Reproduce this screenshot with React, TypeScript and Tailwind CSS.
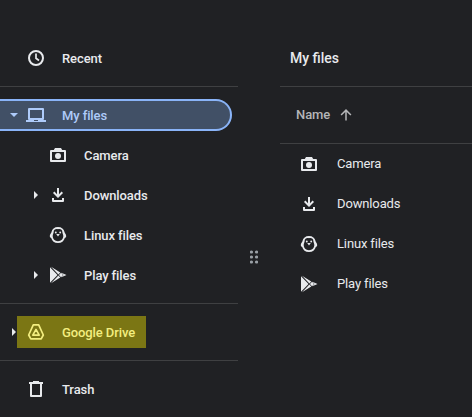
import type { ReactNode } from "react";

type IconName = "clock" | "laptop" | "camera" | "download" | "linux" | "play" | "drive" | "trash";

const shapes: Record<IconName, ReactNode> = {
  clock: (
    <g fill="none" stroke="currentColor" strokeWidth="2">
      <circle cx="10" cy="10" r="7" />
      <path d="M10 5.500v4.800l3 2.200" strokeWidth="1.700" />
    </g>
  ),
  laptop: (
    <path fillRule="evenodd" d="M3 3h14a1 1 0 0 1 1 1v10a1 1 0 0 1-1 1h3v2H0v-2h3a1 1 0 0 1-1-1V4a1 1 0 0 1 1-1zm1 2v8h12V5zM8 15v1h4v-1z" />
  ),
  camera: (
    <>
      <path fillRule="evenodd" d="M7 3h6l1.200 2H17a1 1 0 0 1 1 1v10a1 1 0 0 1-1 1H3a1 1 0 0 1-1-1V6a1 1 0 0 1 1-1h2.800zM4 7v8h12V7z" />
      <circle cx="10" cy="11" r="3" />
    </>
  ),
  download: (
    <path d="M9 3h2v6.200l2.600-2.600L15 8l-5 5-5-5 1.400-1.400L9 9.200zM4 13h2v2h8v-2h2v3a1 1 0 0 1-1 1H5a1 1 0 0 1-1-1z" />
  ),
  linux: (
    <>
      <path fillRule="evenodd" d="M10 2c3.600 0 6 2 6.500 5 .2 1.200 1.700 2.400 1.700 4 0 1-.6 1.700-1.400 2C15.900 16 13.700 18 10 18s-5.900-2-6.800-5c-.8-.3-1.400-1-1.400-2 0-1.600 1.500-2.800 1.700-4C4 4 6.400 2 10 2zm0 2.200C8 3.400 5.600 4.500 5.600 7.200c0 1.200-.9 2-.9 3.800 0 3 2.100 5.200 5.300 5.200s5.300-2.200 5.300-5.200c0-1.800-.9-2.600-.9-3.800 0-2.700-2.400-3.800-4.400-3z" />
      <circle cx="7.800" cy="7.500" r=".95" />
      <circle cx="12.200" cy="7.500" r=".95" />
      <path d="M8.200 9h3.600L10 11.500z" />
    </>
  ),
  play: (
    <path d="M2 2.200v15.600L9.500 10zM3 1.700l7.400 7.700 1.900-1.900zM3 18.300l9.300-5.800-1.900-1.900zM13 7.800 10.900 10l2.100 2.200L15 10zM13.300 7.700l5.200 2.300-5.200 2.300 2.200-2.300z" />
  ),
  drive: (
    <g fill="none" stroke="currentColor" strokeLinejoin="round" strokeWidth="1.700">
      <path d="M7.300 2.900h5.400L17.300 13 15.200 16.800H4.800L2.700 13z" />
      <path d="M10 7.400 13.200 13.100H6.800z" />
    </g>
  ),
  trash: (
    <path fillRule="evenodd" d="M7 2h6v1h4v2h-1v12a1 1 0 0 1-1 1H5a1 1 0 0 1-1-1V5H3V3h4zM6 5v11h8V5z" />
  ),
};

function Icon({ name }: { name: IconName }) {
  return (
    <svg className="size-5 shrink-0" viewBox="0 0 20 20" fill="currentColor">
      {shapes[name]}
    </svg>
  );
}

function RightCaret() {
  return (
    <svg className="h-2 w-1 shrink-0" viewBox="0 0 4 8" fill="currentColor">
      <path d="M0 0l4 4-4 4z" />
    </svg>
  );
}

function NavLabel({ children }: { children: string }) {
  return <span className="ml-4 pt-0.5 tracking-[-0.1px]">{children}</span>;
}

function Child({ name, label, expandable }: { name: IconName; label: string; expandable?: boolean }) {
  return (
    <div className="flex h-8 items-center pl-[34px]">
      <span className="flex w-3.5">{expandable && <RightCaret />}</span>
      <Icon name={name} />
      <NavLabel>{label}</NavLabel>
    </div>
  );
}

function FileRow({ name, label }: { name: IconName; label: string }) {
  return (
    <div className="flex h-10 items-center pl-[19px]">
      <Icon name={name} />
      <span className="ml-[18px] tracking-[-0.14px]">{label}</span>
    </div>
  );
}

const Divider = () => <div className="h-px bg-[#3f4042]" />;

export default function App() {
  return (
    <div className="flex h-[417px] w-[472px] overflow-hidden bg-[#202124] font-['Roboto',sans-serif] text-[13px] leading-5 text-[#e8eaed]">
      <nav className="flex w-[238px] shrink-0 flex-col gap-3 pt-[42px] font-medium">
        <div className="flex h-8 items-center pl-[26px]">
          <Icon name="clock" />
          <NavLabel>Recent</NavLabel>
        </div>
        <Divider />
        <div className="flex flex-col gap-2">
          <div className="flex h-8 w-[232px] items-center rounded-r-full border-y-2 border-r-2 border-[#8ab4f8] bg-[#415066] pl-2.5 text-[#aecbfa]">
            <svg className="mr-2 h-1 w-2" viewBox="0 0 8 4" fill="currentColor">
              <path d="M0 0h8L4 4z" />
            </svg>
            <Icon name="laptop" />
            <NavLabel>My files</NavLabel>
          </div>
          <Child name="camera" label="Camera" />
          <Child name="download" label="Downloads" expandable />
          <Child name="linux" label="Linux files" />
          <Child name="play" label="Play files" expandable />
        </div>
        <Divider />
        <div className="flex h-8 items-center pl-3">
          <span className="flex w-[5px]">
            <RightCaret />
          </span>
          <div className="flex h-8 w-[129px] items-center bg-[#7b7614] pl-[9px] text-[#f3ee80]">
            <Icon name="drive" />
            <NavLabel>Google Drive</NavLabel>
          </div>
        </div>
        <Divider />
        <div className="flex h-8 items-center pl-[26px]">
          <Icon name="trash" />
          <NavLabel>Trash</NavLabel>
        </div>
      </nav>
      <div className="flex w-[42px] shrink-0 pl-3 pt-[250px]">
        <svg className="h-[14px] w-2" viewBox="0 0 8 14" fill="#9aa0a6">
          <circle cx="1.500" cy="2" r="1.600" />
          <circle cx="6.500" cy="2" r="1.600" />
          <circle cx="1.500" cy="7" r="1.600" />
          <circle cx="6.500" cy="7" r="1.600" />
          <circle cx="1.500" cy="12" r="1.600" />
          <circle cx="6.500" cy="12" r="1.600" />
        </svg>
      </div>
      <main className="flex-1 pt-[42px]">
        <h1 className="flex h-11 items-start pl-2.5 pt-1.5 text-sm font-medium">My files</h1>
        <Divider />
        <div className="flex h-14 items-center pl-4 font-medium text-[#b5b6b8]">
          <span className="tracking-[-0.08px]">Name</span>
          <svg className="ml-[7.500px] size-4" viewBox="0 0 16 16" fill="none" stroke="currentColor" strokeWidth="1.500">
            <path d="M8 13.500V3.200M3.100 8 8 3.100 12.900 8" />
          </svg>
        </div>
        <Divider />
        <FileRow name="camera" label="Camera" />
        <FileRow name="download" label="Downloads" />
        <FileRow name="linux" label="Linux files" />
        <FileRow name="play" label="Play files" />
      </main>
    </div>
  );
}
